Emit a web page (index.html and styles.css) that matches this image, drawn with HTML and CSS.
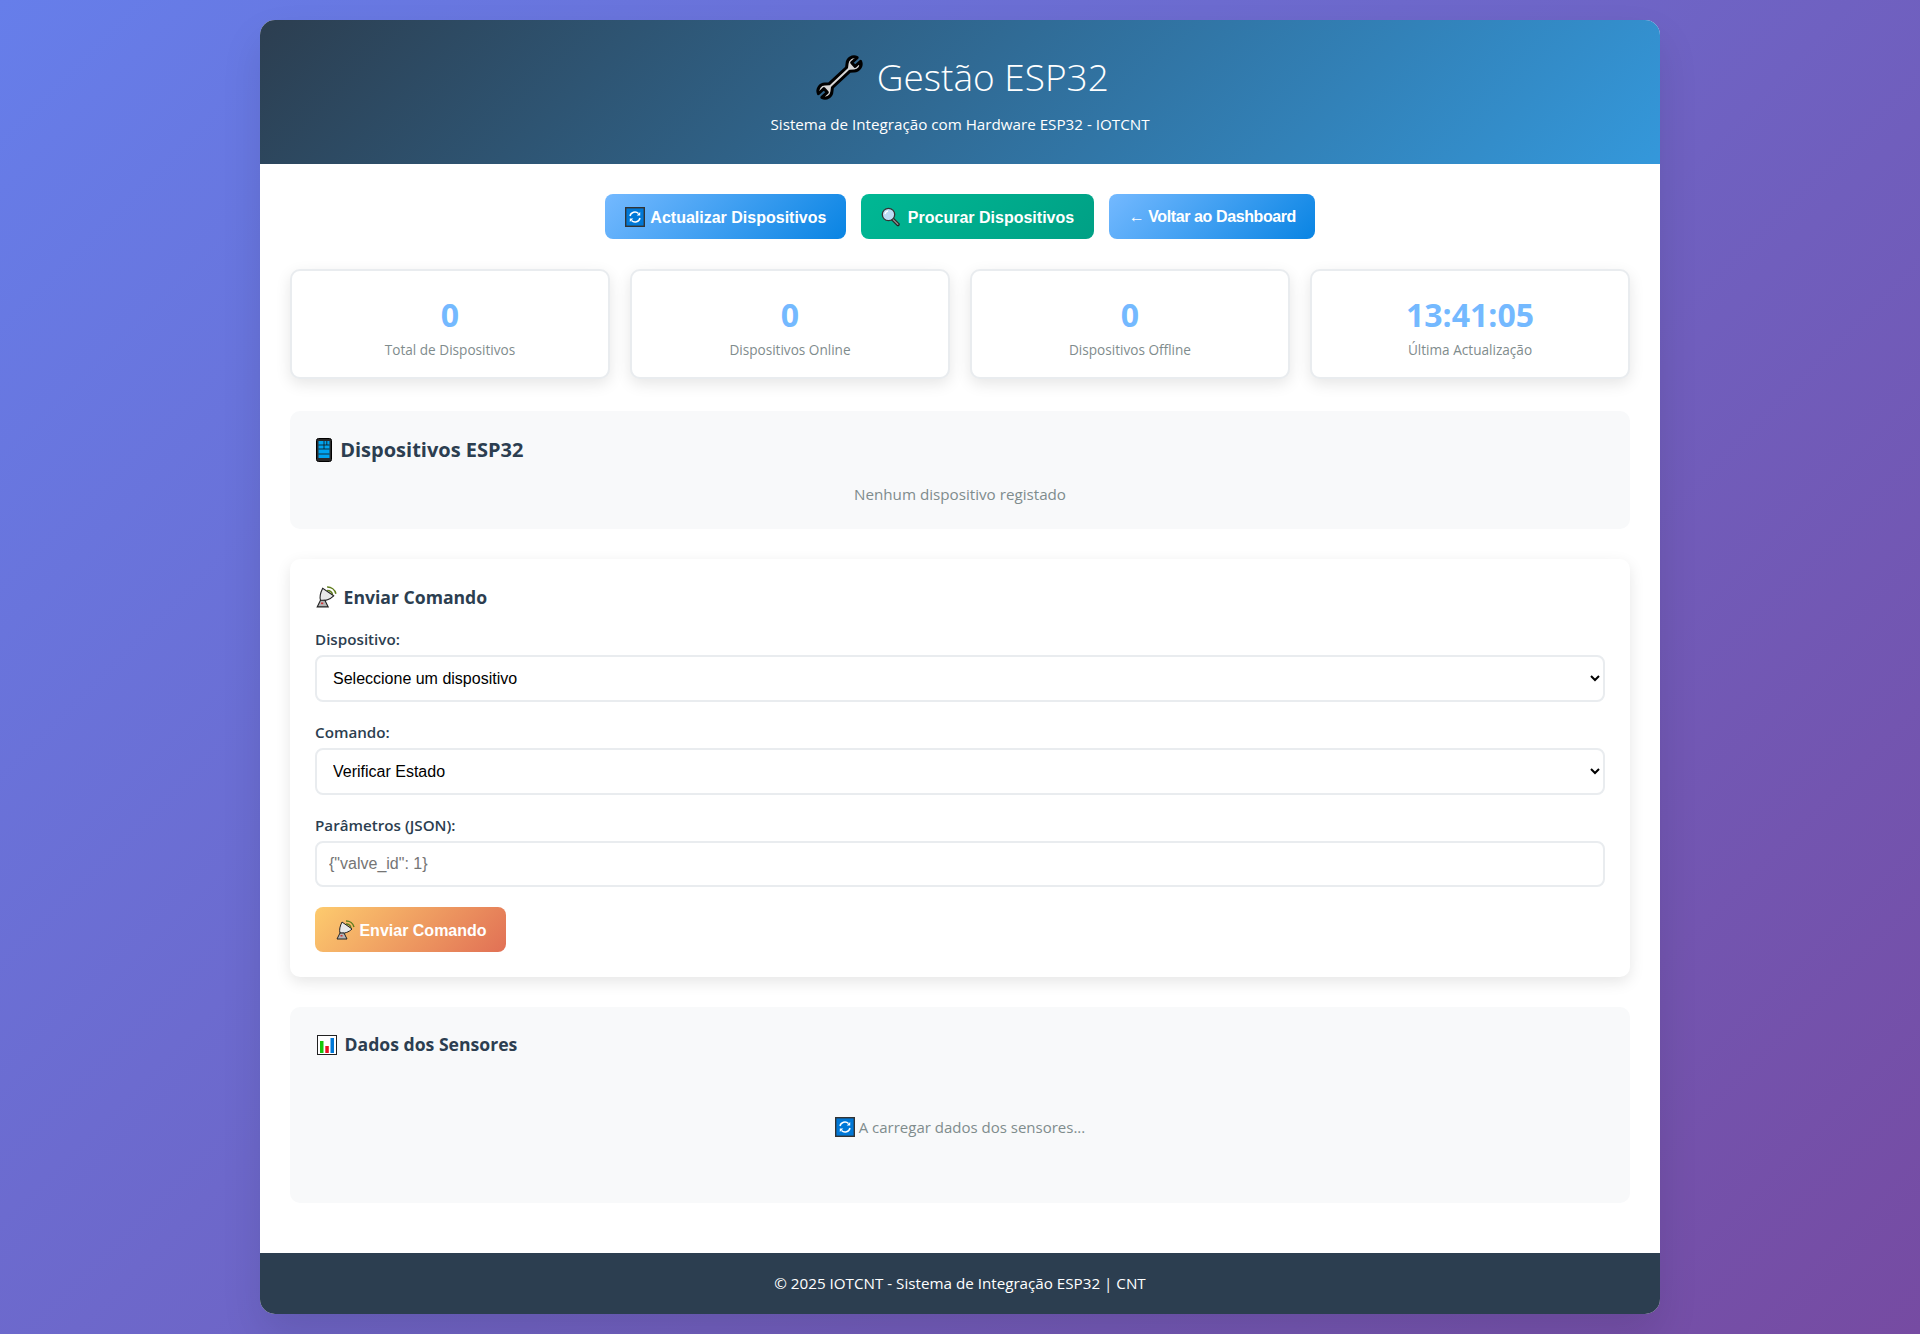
FILE: index.html
```html
<!DOCTYPE html>
<html lang="pt">
<head>
    <meta charset="UTF-8">
    <meta name="viewport" content="width=device-width, initial-scale=1.0">
    <title>Gestão ESP32 - IOTCNT</title>
    <link rel="stylesheet" href="styles.css">
</head>
<body>
    <svg class="sprites" width="0" height="0">
        <symbol id="i-wrench" viewBox="2 0 50 56">
            <path transform="translate(-2.500 0.500) rotate(-43 30 28)" d="M56.500 25.500 L49 25.500 L49 30.500 L56.500 30.500 A7 7 0 0 1 45 33 L42 30.500 L18 30.500 L15 33 A7 7 0 0 1 3.500 30.500 L11 30.500 L11 25.500 L3.500 25.500 A7 7 0 0 1 15 23 L18 25.500 L42 25.500 L45 23 A7 7 0 0 1 56.500 25.500 Z" fill="#d6d6d6" stroke="#000" stroke-width="3" stroke-linejoin="round"/>
        </symbol>
        <symbol id="i-refresh" viewBox="0 0 20 20">
            <rect x="0.700" y="0.700" width="18.600" height="18.600" fill="#0078d7" stroke="#333" stroke-width="1.400"/>
            <path d="M5 9 A5 5 0 0 1 13.500 6.500 M15 11 A5 5 0 0 1 6.500 13.500" fill="none" stroke="#fff" stroke-width="1.500"/>
            <path d="M15.200 5 L15.200 8.500 L11.700 8.500 Z M4.800 15 L4.800 11.500 L8.300 11.500 Z" fill="#fff"/>
        </symbol>
        <symbol id="i-search" viewBox="0 0 20 20">
            <path d="M11.500 12 L17 17.500" stroke="#222" stroke-width="3.500" stroke-linecap="round"/>
            <path d="M12 12.500 L16.800 17.300" stroke="#8a8a8a" stroke-width="1.500" stroke-linecap="round"/>
            <circle cx="7.500" cy="7.500" r="6.200" fill="#bcdcf5" stroke="#333" stroke-width="1.300"/>
            <path d="M4 7 A4 4 0 0 1 7 4" fill="none" stroke="#fff" stroke-width="1.300"/>
        </symbol>
        <symbol id="i-phone" viewBox="0 0 16 24">
            <rect x="0.500" y="0.500" width="15" height="23" rx="2" fill="#2a2a2a" stroke="#000"/>
            <rect x="2.500" y="3" width="11" height="17" fill="#00a4ef"/>
            <path d="M2.500 7 H13.500 M2.500 11 H13.500 M2.500 16 H13.500 M8 3 V11 M10.800 3 V7" stroke="#111" stroke-width="0.800"/>
        </symbol>
        <symbol id="i-dish" viewBox="0 0 20 20">
            <path d="M11 1 A8 8 0 0 1 19 7" fill="none" stroke="#5f7d1c" stroke-width="1.400"/>
            <path d="M11 4 A5 5 0 0 1 16 8" fill="none" stroke="#5f7d1c" stroke-width="1.400"/>
            <circle cx="12" cy="7" r="1.300" fill="#222"/>
            <path d="M7 2 C5 6 4 10 5 13 C9 14 14 12 17 9 Z" fill="#e8e8e8" stroke="#222" stroke-width="1"/>
            <path d="M5 13 L2 19 H12 L9 13 Z" fill="#b5b5b5" stroke="#222" stroke-width="1"/>
            <rect x="5.500" y="15" width="2" height="1.500" fill="#d13438"/>
        </symbol>
        <symbol id="i-chart" viewBox="0 0 20 20">
            <rect x="0.500" y="0.500" width="19" height="19" fill="#fff" stroke="#222"/>
            <rect x="3" y="6" width="3.500" height="12" fill="#16c60c"/>
            <rect x="8.300" y="11" width="3.500" height="7" fill="#e81224"/>
            <rect x="13.500" y="3" width="3.500" height="15" fill="#0078d7"/>
        </symbol>
    </svg>

    <div class="container">
        <header class="header">
            <h1><svg class="emoji emoji-title"><use href="#i-wrench"/></svg> Gestão ESP32</h1>
            <p>Sistema de Integração com Hardware ESP32 - IOTCNT</p>
        </header>

        <main class="content">
            <div class="controls">
                <button class="btn btn-primary"><svg class="emoji emoji-wide"><use href="#i-refresh"/></svg> Actualizar Dispositivos</button>
                <button class="btn btn-success"><svg class="emoji emoji-wide"><use href="#i-search"/></svg> Procurar Dispositivos</button>
                <button class="btn btn-primary btn-back">← Voltar ao Dashboard</button>
            </div>

            <div class="stats">
                <div class="stat-card">
                    <div class="stat-number">0</div>
                    <div class="stat-label">Total de Dispositivos</div>
                </div>
                <div class="stat-card">
                    <div class="stat-number">0</div>
                    <div class="stat-label">Dispositivos Online</div>
                </div>
                <div class="stat-card">
                    <div class="stat-number">0</div>
                    <div class="stat-label">Dispositivos Offline</div>
                </div>
                <div class="stat-card">
                    <div class="stat-number">13:41:05</div>
                    <div class="stat-label">Última Actualização</div>
                </div>
            </div>

            <section class="panel panel-devices">
                <h2><svg class="emoji emoji-phone"><use href="#i-phone"/></svg> Dispositivos ESP32</h2>
                <div class="empty">Nenhum dispositivo registado</div>
            </section>

            <section class="command-form">
                <h3><svg class="emoji emoji-heading"><use href="#i-dish"/></svg> Enviar Comando</h3>
                <div class="form-group">
                    <label for="device">Dispositivo:</label>
                    <select id="device">
                        <option>Seleccione um dispositivo</option>
                    </select>
                </div>
                <div class="form-group">
                    <label for="command">Comando:</label>
                    <select id="command">
                        <option>Verificar Estado</option>
                    </select>
                </div>
                <div class="form-group">
                    <label for="params">Parâmetros (JSON):</label>
                    <input id="params" type="text" placeholder='{"valve_id": 1}'>
                </div>
                <button class="btn btn-warning"><svg class="emoji"><use href="#i-dish"/></svg> Enviar Comando</button>
            </section>

            <section class="panel panel-sensors">
                <h3><svg class="emoji emoji-chart"><use href="#i-chart"/></svg> Dados dos Sensores</h3>
                <div class="loading"><svg class="emoji"><use href="#i-refresh"/></svg> A carregar dados dos sensores...</div>
            </section>
        </main>

        <footer class="footer">© 2025 IOTCNT - Sistema de Integração ESP32 | CNT</footer>
    </div>
</body>
</html>
```

FILE: styles.css
```css
* {
    margin: 0;
    padding: 0;
    box-sizing: border-box;
}

body {
    font-family: "Open Sans", "Noto Sans", sans-serif;
    background: linear-gradient(135deg, #667eea 0%, #764ba2 100%);
    min-height: 100vh;
    padding: 20px;
}

.sprites {
    position: absolute;
}

.emoji {
    width: 20px;
    height: 20px;
    vertical-align: -4px;
}

.emoji-wide {
    margin-right: 2px;
}

.emoji-title {
    width: 50px;
    height: 56px;
    vertical-align: -14px;
    margin: 0 3px;
}

.emoji-phone {
    width: 16px;
    height: 24px;
    vertical-align: -5px;
    margin: 0 3px 0 1px;
}

.emoji-heading {
    width: 22px;
    height: 22px;
    vertical-align: -4px;
    margin-right: 2px;
}

.emoji-chart {
    vertical-align: -4px;
    margin: 0 3px 0 2px;
}

.container {
    max-width: 1400px;
    margin: 0 auto;
    background: #fff;
    border-radius: 15px;
    overflow: hidden;
    box-shadow: 0 20px 40px rgba(0, 0, 0, 0.1);
}

.header {
    height: 144px;
    padding-top: 29px;
    text-align: center;
    color: #fff;
    background: linear-gradient(135deg, #2c3e50 0%, #3498db 100%);
}

.header h1 {
    font-size: 37px;
    font-weight: 300;
    line-height: 52px;
    margin-bottom: 8px;
}

.header p {
    font-size: 15.2px;
    line-height: 22px;
}

.content {
    padding: 30px 30px 50px;
}

.controls {
    display: flex;
    justify-content: center;
    gap: 15px;
    margin-bottom: 30px;
}

.btn {
    height: 45px;
    padding: 0 20px;
    border: none;
    border-radius: 8px;
    color: #fff;
    font-family: "Liberation Sans", Arial, sans-serif;
    font-size: 16px;
    font-weight: 600;
    cursor: pointer;
}

.btn-back {
    letter-spacing: -0.4px;
    padding: 0 19.500px;
}

.btn-primary {
    background: linear-gradient(135deg, #74b9ff 0%, #0984e3 100%);
}

.btn-success {
    background: linear-gradient(135deg, #00b894 0%, #00a085 100%);
}

.btn-warning {
    padding: 0 19px 0 20px;
    background: linear-gradient(135deg, #fdcb6e 0%, #e17055 100%);
}

.stats {
    display: grid;
    grid-template-columns: repeat(4, 1fr);
    gap: 20px;
    margin-bottom: 32px;
}

.stat-card {
    height: 110px;
    padding: 24px 20px 0;
    text-align: center;
    background: #fff;
    border: 2px solid #e9ecef;
    border-radius: 10px;
    box-shadow: 0 5px 15px rgba(0, 0, 0, 0.1);
}

.stat-number {
    font-size: 32px;
    font-weight: 700;
    line-height: 40px;
    color: #74b9ff;
}

.stat-label {
    font-size: 13.6px;
    line-height: 20px;
    margin-top: 5px;
    color: #7f8c8d;
}

.panel {
    padding: 25px;
    background: #f8f9fa;
    border-radius: 10px;
}

.panel-devices {
    height: 118px;
    margin-bottom: 30px;
}

.panel-devices h2 {
    font-size: 20px;
    line-height: 28px;
    font-weight: 700;
    color: #2c3e50;
}

.panel h3,
.command-form h3 {
    font-size: 17.6px;
    line-height: 26px;
    font-weight: 700;
    color: #2c3e50;
}

.empty {
    margin-top: 19px;
    text-align: center;
    font-size: 15.2px;
    line-height: 22px;
    color: #7f8c8d;
}

.command-form {
    height: 418px;
    padding: 25px;
    margin-bottom: 30px;
    background: #fff;
    border-radius: 10px;
    box-shadow: 0 5px 15px rgba(0, 0, 0, 0.1);
}

.command-form h3 {
    margin-bottom: 19px;
}

.form-group {
    margin-bottom: 20px;
}

.form-group label {
    display: block;
    margin-bottom: 5px;
    font-size: 15.2px;
    line-height: 21px;
    font-weight: 600;
    color: #2c3e50;
}

.form-group select,
.form-group input {
    display: block;
    width: 100%;
    padding: 12px;
    border: 2px solid #e9ecef;
    border-radius: 8px;
    background: #fff;
    font-family: "Liberation Sans", Arial, sans-serif;
    font-size: 16px;
}

.form-group select {
    height: 47px;
    color: #000;
}

.form-group input {
    height: 46px;
}

.panel-sensors {
    height: 196px;
}

.panel-sensors h3 {
    margin-top: -1px;
}

.loading {
    margin-top: 59px;
    text-align: center;
    font-size: 15px;
    line-height: 22px;
    color: #7f8c8d;
}

.footer {
    height: 61px;
    line-height: 61px;
    text-align: center;
    font-size: 15.2px;
    color: #fff;
    background: #2c3e50;
}
```
